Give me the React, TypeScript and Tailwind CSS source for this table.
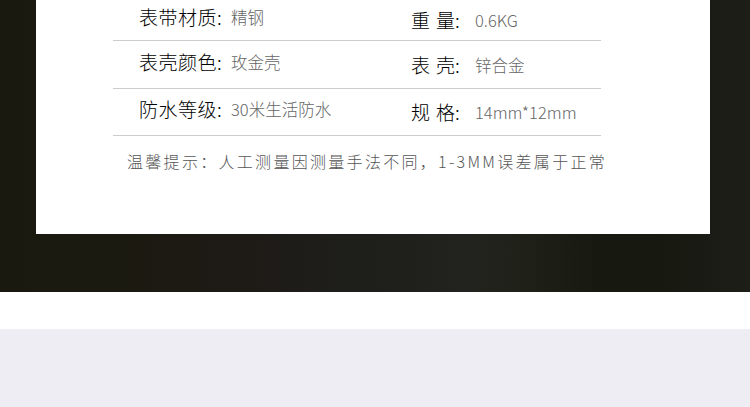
const rows = [
  { l1: "表带材质:", v1: "精钢", a: "重", b: "量:", v2: "0.6KG", h: "h-[41px]" },
  { l1: "表壳颜色:", v1: "玫金壳", a: "表", b: "壳:", v2: "锌合金", h: "h-[48px]" },
  { l1: "防水等级:", v1: "30米生活防水", a: "规", b: "格:", v2: "14mm*12mm", h: "h-[47px]" },
];

export default function App() {
  return (
    <div className="w-[750px] h-[407px] overflow-hidden bg-white font-['Noto_Sans_CJK_SC','Noto_Sans',sans-serif]">
      <div className="h-[292px] pl-[36px] pr-[40px] bg-[linear-gradient(to_right,#1a1910_0%,#1b1a10_17%,#1e1a16_30%,#1e1f1b_50%,#22231e_62%,#1f2119_70%,#171910_80%,#171810_88%,#1d1e18_100%)]">
        <div className="h-[234px] bg-white">
          <div className="ml-[77px] w-[488px]">
            {rows.map((r, i) => (
              <div key={i} className={`${r.h} flex items-center pl-[26px] border-b border-[#cccccc]`}>
                <div className="w-[272px] flex items-center mb-[5px]">
                  <span className="w-[92px] text-[19px] tracking-[0.5px] font-light text-[#000000]">{r.l1}</span>
                  <span className="text-[16.5px] font-light text-[#666666]">{r.v1}</span>
                </div>
                <div className="flex items-center pt-[1px]">
                  <span className="w-[64px] text-[19px] font-light text-[#000000]">
                    {r.a}<span className="ml-[6px]">{r.b}</span>
                  </span>
                  <span className="text-[16.5px] font-light text-[#666666]">{r.v2}</span>
                </div>
              </div>
            ))}
          </div>
          <p className="mt-[13px] ml-[91px] text-[16px] leading-[24px] tracking-[2.3px] font-light text-[#555555]">
            温馨提示：人工测量因测量手法不同，1-3MM误差属于正常
          </p>
        </div>
      </div>
      <div className="h-[37px] bg-white" />
      <div className="h-[78px] bg-[#eeedf3]" />
    </div>
  );
}
